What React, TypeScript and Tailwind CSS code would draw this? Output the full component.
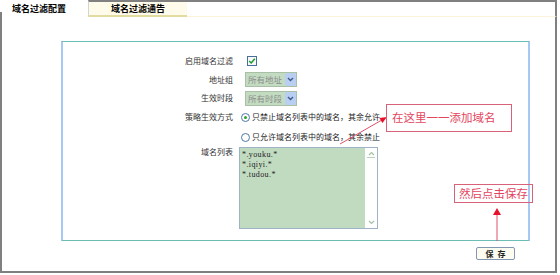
function Select({ text }: { text: string }) {
  return (
    <div className="ml-[6px] flex h-[15px] w-[52px] border border-[#a9bfa6] bg-[#c3dcc1]">
      <span className="flex-1 pl-[2px] text-[8.5px] leading-[13px] text-[#8c8c8c]">{text}</span>
      <div className="flex w-[11px] items-center justify-center rounded-[2px] bg-[#b8cff3]">
        <svg width="7" height="5" viewBox="0 0 7 5">
          <path d="M1 1 L3.5 3.5 L6 1" stroke="#3f5a88" strokeWidth="1.4" fill="none" />
        </svg>
      </div>
    </div>
  );
}

function Radio({ checked }: { checked?: boolean }) {
  return (
    <div className="ml-[2px] flex h-[9px] w-[9px] items-center justify-center rounded-full border border-[#4d7aa8] bg-white">
      {checked && <div className="h-[3px] w-[3px] rounded-full bg-[#2aa52a]" />}
    </div>
  );
}

export default function App() {
  const domains = ['*.youku.*', '*.iqiyi.*', '*.tudou.*'];

  return (
    <div className="relative h-[275px] w-[560px] bg-white font-['Noto_Sans_CJK_SC','Noto_Sans',sans-serif] text-[#333]">
      <div className="w-[557px]">
        {/* Tabs */}
        <div className="flex h-[17px]">
          <div className="flex w-[88px]">
            <div className="mt-[12px] w-[2px] bg-[#808080]" />
            <span className="pl-[10px] pt-[3px] text-[9px] font-bold leading-[12px] text-black">域名过滤配置</span>
          </div>
          <div className="flex w-[99px] items-center justify-center border-t-2 border-b-2 border-l border-t-[#808080] border-b-[#e3dba0] border-l-[#d4d4d4] bg-[#fffbea] text-[9px] font-bold leading-[12px] text-black">
            域名过滤通告
          </div>
          <div className="flex-1 border-t-2 border-r-2 border-b border-t-[#808080] border-r-[#808080] border-b-[#fbf3dc]" />
        </div>

        {/* Body */}
        <div className="h-[256px] border-x-2 border-b-2 border-[#808080] pl-[59px] pt-[24px]">
          <div className="h-[200px] w-[469px] border-x-2 border-y border-x-[#a6c8f4] border-y-[#6cbdb4] pt-[10px]">
            <div className="grid grid-cols-[170px_1fr] grid-rows-[18px_19px_18px_20px_20px_auto] gap-x-[6px] text-[8px] leading-[10px]">
              <div className="flex items-center justify-end">启用域名过滤</div>
              <div className="flex items-center">
                <div className="ml-[8px] flex h-[10px] w-[10px] items-center justify-center border border-[#4a6f96] bg-[#f6f8fb]">
                  <svg width="8" height="8" viewBox="0 0 8 8">
                    <path d="M1.2 4 L3.2 6 L6.8 1.8" stroke="#1f9a2a" strokeWidth="1.5" fill="none" />
                  </svg>
                </div>
              </div>

              <div className="flex items-center justify-end">地址组</div>
              <div className="flex items-center">
                <Select text="所有地址" />
              </div>

              <div className="flex items-center justify-end">生效时段</div>
              <div className="flex items-center">
                <Select text="所有时段" />
              </div>

              <div className="flex items-center justify-end">策略生效方式</div>
              <div className="flex items-center gap-[2px]">
                <Radio checked />
                <span className="text-[#222]">只禁止域名列表中的域名，其余允许</span>
              </div>

              <div />
              <div className="flex items-center gap-[2px]">
                <Radio />
                <span className="text-[#222]">只允许域名列表中的域名，其余禁止</span>
              </div>

              <div className="flex items-start justify-end">域名列表</div>
              <div className="flex h-[82px] w-[139px] border border-[#9eb2c8] bg-[#c1dbc1]">
                <div className="flex-1 pl-[2px] pt-[2px] font-['Liberation_Serif',serif] text-[8px] leading-[10px] tracking-[0.4px] text-[#222]">
                  {domains.map((d) => (
                    <div key={d}>{d}</div>
                  ))}
                </div>
                <div className="flex w-[12px] flex-col items-center justify-between bg-white py-[3px]">
                  <div className="flex flex-col items-center gap-[1px]">
                    <svg width="7" height="5" viewBox="0 0 7 5">
                      <path d="M1 4 L3.5 1.5 L6 4" stroke="#a6c2a6" strokeWidth="1.2" fill="none" />
                    </svg>
                    <div className="h-px w-[8px] bg-[#b9d2b9]" />
                  </div>
                  <svg width="7" height="5" viewBox="0 0 7 5">
                    <path d="M1 1 L3.5 3.5 L6 1" stroke="#a6c2a6" strokeWidth="1.2" fill="none" />
                  </svg>
                </div>
              </div>
            </div>
          </div>

          <div className="flex w-[469px] justify-end pr-[15px] pt-[6px]">
            <button className="flex h-[13px] w-[39px] items-center justify-center gap-[4px] rounded-[2px] border border-[#8296b6] bg-[#fdfcf0] text-[8px] font-bold leading-none text-[#222]">
              <span>保</span>
              <span>存</span>
            </button>
          </div>
        </div>
      </div>

      {/* Annotations */}
      <svg className="pointer-events-none absolute left-0 top-0" width="560" height="275">
        <line x1="340" y1="144" x2="381" y2="120.5" stroke="#e0506a" strokeWidth="1" />
        <polygon points="387,117 382.4,123.1 379.4,117.9" fill="#e8102a" />
        <line x1="497" y1="241" x2="497" y2="214" stroke="#e0506a" strokeWidth="1" />
        <polygon points="497,208 493,215 501,215" fill="#e8102a" />
      </svg>
      <div className="absolute left-[386px] top-[104px] flex h-[28px] w-[126px] items-center border-[1.5px] border-[#d8627a] pl-[5px] text-[11.5px] leading-none text-[#e3445e]">
        在这里一一添加域名
      </div>
      <div className="absolute left-[454px] top-[184px] flex h-[19px] w-[79px] items-center border-[1.5px] border-[#d8627a] pl-[4px] text-[11.5px] leading-none text-[#e3445e]">
        然后点击保存
      </div>
    </div>
  );
}
